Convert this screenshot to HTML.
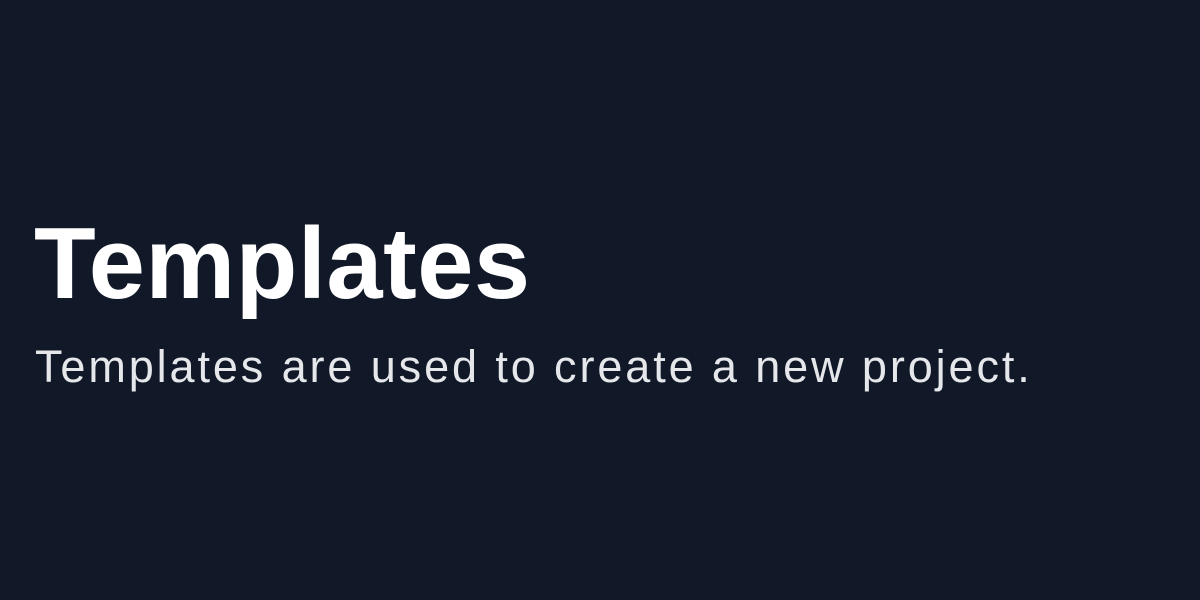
<!DOCTYPE html>
<html><head><style>
html,body{margin:0;padding:0;}
body{width:1200px;height:600px;background:#111827;position:relative;overflow:hidden;font-family:"Liberation Sans",sans-serif;}
.t{position:absolute;left:34px;top:204px;font-size:101px;font-weight:bold;color:#fff;line-height:120px;letter-spacing:0.5px;white-space:nowrap;}
.s{position:absolute;left:35px;top:337px;font-size:45px;color:#e5e7eb;line-height:60px;letter-spacing:2.9px;white-space:nowrap;}
</style></head><body>
<div class="t">Templates</div>
<div class="s">Templates are used to create a new project.</div>
</body></html>
